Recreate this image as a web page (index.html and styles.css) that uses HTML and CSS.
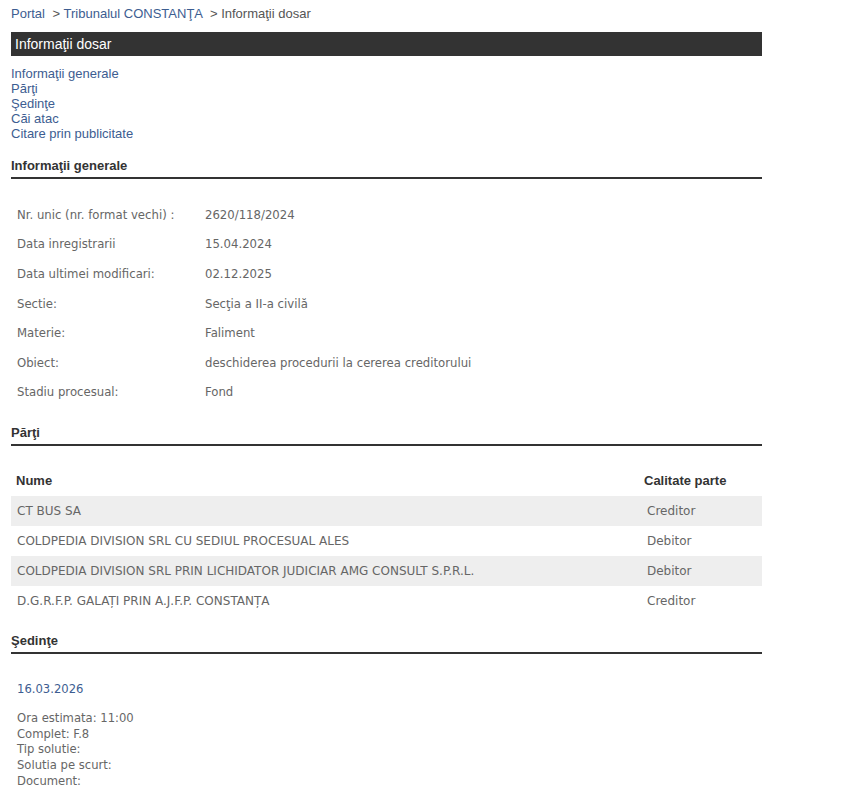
FILE: index.html
```html
<!DOCTYPE html>
<html lang="ro">
<head>
<meta charset="utf-8">
<title>Informaţii dosar</title>
<link rel="stylesheet" href="styles.css">
</head>
<body>
<div class="page">
  <div class="crumbs"><a href="#">Portal</a> <span class="sep">&gt;</span> <a href="#">Tribunalul CONSTANŢA</a> <span class="sep">&gt;</span> <span class="cur">Informaţii dosar</span></div>
  <div class="bar">Informaţii dosar</div>
  <ul class="toc">
    <li><a href="#">Informaţii generale</a></li>
    <li><a href="#">Părţi</a></li>
    <li><a href="#">Şedinţe</a></li>
    <li><a href="#">Căi atac</a></li>
    <li><a href="#">Citare prin publicitate</a></li>
  </ul>

  <h2 class="sec sec-first">Informaţii generale</h2>
  <table class="info">
    <tr><td class="lbl">Nr. unic (nr. format vechi) :</td><td>2620/118/2024</td></tr>
    <tr><td class="lbl">Data inregistrarii</td><td>15.04.2024</td></tr>
    <tr><td class="lbl">Data ultimei modificari:</td><td>02.12.2025</td></tr>
    <tr><td class="lbl">Sectie:</td><td>Secţia a II-a civilă</td></tr>
    <tr><td class="lbl">Materie:</td><td>Faliment</td></tr>
    <tr><td class="lbl">Obiect:</td><td>deschiderea procedurii la cererea creditorului</td></tr>
    <tr><td class="lbl">Stadiu procesual:</td><td>Fond</td></tr>
  </table>

  <h2 class="sec">Părţi</h2>
  <table class="parti">
    <thead><tr><th>Nume</th><th class="cal">Calitate parte</th></tr></thead>
    <tbody>
      <tr class="alt"><td>CT BUS SA</td><td class="cal">Creditor</td></tr>
      <tr><td>COLDPEDIA DIVISION SRL CU SEDIUL PROCESUAL ALES</td><td class="cal">Debitor</td></tr>
      <tr class="alt"><td>COLDPEDIA DIVISION SRL PRIN LICHIDATOR JUDICIAR AMG CONSULT S.P.R.L.</td><td class="cal">Debitor</td></tr>
      <tr><td>D.G.R.F.P. GALAȚI PRIN A.J.F.P. CONSTANȚA</td><td class="cal">Creditor</td></tr>
    </tbody>
  </table>

  <h2 class="sec">Şedinţe</h2>
  <div class="sedinta">
    <div class="date">16.03.2026</div>
    <div class="det">
      Ora estimata: 11:00<br>
      Complet: F.8<br>
      Tip solutie:<br>
      Solutia pe scurt:<br>
      Document:
    </div>
  </div>
</div>
</body>
</html>
```

FILE: styles.css
```css
html, body { margin: 0; padding: 0; background: #fff; }
body { font-family: "Liberation Sans", Arial, sans-serif; color: #333; }
.page { width: 751px; padding: 6px 0 0 11px; }
a { color: #3d5d91; text-decoration: none; }
.crumbs { font-size: 13px; line-height: 16px; color: #555; }
.crumbs .sep { color: #555; margin-left: 4px; }
.crumbs .cur { color: #555; }
.bar { margin-top: 10px; height: 24px; line-height: 24px; background: #333; color: #fff; font-size: 14px; padding-left: 4px; }
.toc { list-style: none; margin: 10px 0 0; padding: 0; font-size: 13px; line-height: 15px; }
.sec { margin: 0; font-size: 13px; font-weight: bold; color: #333; padding-bottom: 4px; border-bottom: 2px solid #333; line-height: 15px; }
.sec-first { margin-top: 17px; }
.info { border-collapse: collapse; margin-top: 21px; margin-bottom: 18px; font-family: "DejaVu Sans", sans-serif; font-size: 11.7px; color: #666; }
.info td { height: 29.6px; padding: 0 6px; vertical-align: middle; }
.info td.lbl { width: 176px; }
.parti { border-collapse: collapse; width: 751px; margin-top: 18px; margin-bottom: 17px; font-family: "DejaVu Sans", sans-serif; font-size: 12px; color: #666; }
.parti th { font-family: "Liberation Sans", Arial, sans-serif; font-size: 13px; font-weight: bold; color: #333; text-align: left; height: 32px; padding: 0 5px; vertical-align: middle; }
.parti td { height: 30px; padding: 0 6px; vertical-align: middle; }
.parti th.cal { width: 113px; padding-left: 3px; }
.parti td.cal { padding-left: 6px; }
.parti tr.alt td { background: #eee; }
.sedinta { padding: 27px 0 0 6px; font-family: "DejaVu Sans", sans-serif; font-size: 11.6px; color: #666; }
.sedinta .date { color: #3d5d91; line-height: 16px; }
.sedinta .det { margin-top: 14px; line-height: 15.6px; }
```
